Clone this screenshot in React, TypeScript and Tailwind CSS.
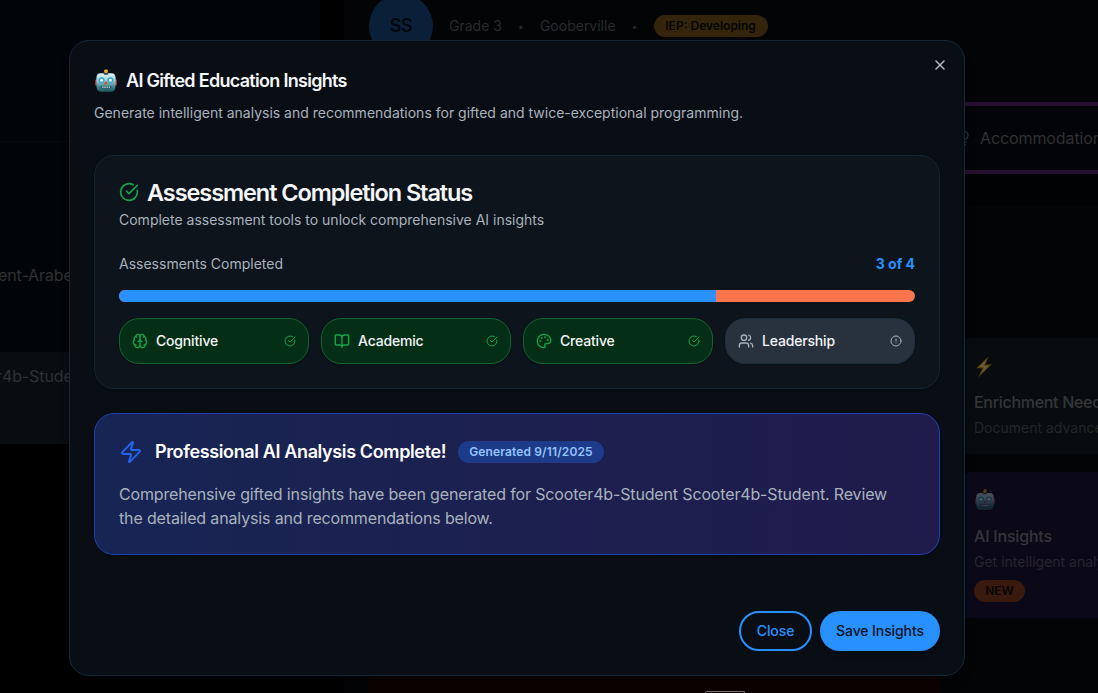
import React from "react";
import {
  Brain,
  BookOpen,
  CircleAlert,
  CircleCheckBig,
  Lightbulb,
  Palette,
  Users,
  X,
  Zap,
} from "lucide-react";

function Robot({ className }: { className: string }) {
  return (
    <svg viewBox="0 0 24 24" className={className} aria-hidden="true">
      <defs>
        <linearGradient id="robotFace" x1="0" y1="0" x2="0" y2="1">
          <stop offset="0" stopColor="#d9f2f4" />
          <stop offset="0.4" stopColor="#a5d0d6" />
          <stop offset="0.7" stopColor="#438b97" />
          <stop offset="1" stopColor="#17545f" />
        </linearGradient>
      </defs>
      <rect x="1" y="10.4" width="3" height="6" rx="1.2" fill="#a5343a" />
      <rect x="20" y="10.4" width="3" height="6" rx="1.2" fill="#a5343a" />
      <path d="M6.500 4.300h11Q21.600 4.300 21.600 9.300v7.200Q21.600 22.800 17 22.800H7Q2.400 22.800 2.400 16.500V9.300Q2.400 4.300 6.500 4.300Z" fill="url(#robotFace)" />
      <rect x="9.800" y="2.800" width="4.400" height="3" rx="0.8" fill="#3a4350" />
      <rect x="10.200" y="0.400" width="3.600" height="3.600" rx="1.400" fill="#f5ae2c" />
      <circle cx="7.600" cy="11.300" r="3.100" fill="#35aac2" />
      <circle cx="16.400" cy="11.300" r="3.100" fill="#35aac2" />
      <circle cx="7.600" cy="11.300" r="1.500" fill="#f3feff" />
      <circle cx="16.400" cy="11.300" r="1.500" fill="#f3feff" />
      <path d="M12 11.800 14.200 15.200H9.800Z" fill="#e0473f" />
      <rect x="6.600" y="16.900" width="10.800" height="2.600" rx="1.200" fill="#254f5b" />
      <path d="M8 18.200h8" stroke="#d8e9ea" strokeWidth="1.300" strokeDasharray="1.500 0.700" />
    </svg>
  );
}

function Bolt({ className }: { className: string }) {
  return (
    <svg viewBox="0 0 20 22" className={className} aria-hidden="true">
      <path d="M14.500 0.500 2.300 12.300 8.600 12.200 4.200 21.500 17.700 8.300 11.200 8.700Z" fill="#5a3f0a" />
      <path d="M12.700 3.200 4.600 11.300 10 11.200 7 17.700 15 9.500 9.500 9.800Z" fill="#665a38" />
    </svg>
  );
}

const assessments = [
  { name: "Cognitive", icon: Brain, done: true },
  { name: "Academic", icon: BookOpen, done: true },
  { name: "Creative", icon: Palette, done: true },
  { name: "Leadership", icon: Users, done: false },
];

function AssessmentChip({ name, icon: Icon, done }: (typeof assessments)[number]) {
  return (
    <div
      className={
        "flex h-[46px] items-center gap-2 rounded-[20px] border px-3 shadow-sm " +
        (done ? "border-[#14642f] bg-[#052e16]" : "border-[#1c2f3f] bg-[#28323e]")
      }
    >
      <Icon size={16} className={done ? "text-[#16a34a]" : "text-[#a6afba]"} />
      <span className="flex-1 text-sm font-medium tracking-[-0.18px] text-[#f2f4f6]">{name}</span>
      {done ? (
        <CircleCheckBig size={12} className="text-[#16a34a]" />
      ) : (
        <CircleAlert size={12} className="text-[#a6afba]" />
      )}
    </div>
  );
}

function Sidebar() {
  return (
    <aside className="flex w-80 shrink-0 flex-col bg-[#020507] text-base tracking-[-0.1px] text-[#2f3133]">
      <div className="h-[142px] border-b border-[#06090b]" />
      <div className="-ml-0.5 h-[210px] pt-[121px] whitespace-nowrap">ent-Arabella</div>
      <div className="-ml-1 h-[92px] bg-[#0a0d10] pt-3 whitespace-nowrap">r4b-Student</div>
      <div className="flex-1 bg-black" />
    </aside>
  );
}

function StudentPage() {
  return (
    <main className="ml-6 flex w-[900px] shrink-0 flex-col bg-[#020406]">
      <header className="flex h-[102px] shrink-0 items-start pl-[25px] text-sm text-[#292b2d]">
        <div className="-mt-[6px] flex size-16 items-center justify-center rounded-full bg-[#0a1f38] text-lg font-medium tracking-[-0.4px] text-[#020508]">
          SS
        </div>
        <div className="mt-[15px] ml-4 flex h-[22px] items-center gap-4">
          <span>Grade 3</span>
          <span className="w-[6px] text-center text-[10px]">•</span>
          <span>Gooberville</span>
          <span className="w-[6px] text-center text-[10px]">•</span>
          <span className="flex h-[22px] w-[114px] items-center justify-center rounded-full bg-[#35240c] text-xs font-semibold text-[#050505]">
            IEP: Developing
          </span>
        </div>
      </header>
      <nav className="flex h-[72px] shrink-0 items-center border-y-4 border-[#270f30] bg-[#030407] pl-[612px] text-base tracking-[-0.1px] text-[#303133]">
        <Lightbulb size={16} />
        <span className="ml-2 whitespace-nowrap">Accommodations</span>
      </nav>
      <div className="h-8 shrink-0 bg-[#010203]" />
      <div className="flex h-[470px] shrink-0 flex-col pt-[132px] pl-[614px]">
        <section className="h-[116px] shrink-0 rounded-xl bg-[#080c0f] pt-[18px] pl-4 whitespace-nowrap">
          <Bolt className="h-[22px] w-5" />
          <h3 className="mt-3 text-base font-medium tracking-[-0.3px] text-[#343638]">Enrichment Needs</h3>
          <p className="mt-1 text-sm text-[#212528]">Document advanced learning</p>
        </section>
        <section className="mt-[18px] h-[146px] shrink-0 rounded-xl bg-[#0b0817] pt-[17px] pl-4 whitespace-nowrap">
          <Robot className="size-[22px] opacity-30" />
          <h3 className="mt-[13px] text-base font-medium tracking-[-0.2px] text-[#36343b]">AI Insights</h3>
          <p className="mt-1 text-sm text-[#28252f]">Get intelligent analysis</p>
          <span className="mt-2 flex h-[22px] w-[51px] items-center justify-center rounded-full bg-[#3a190f] text-xs font-semibold text-[#070403]">
            NEW
          </span>
        </section>
      </div>
      <div className="ml-[25px] flex h-[17px] w-[571px] shrink-0 items-end justify-end bg-[#0c0201] pr-[195px]">
        <div className="h-0.5 w-10 rounded-t border border-b-0 border-[#77716f]" />
      </div>
    </main>
  );
}

function InsightsDialog() {
  return (
    <div
      role="dialog"
      className="absolute top-10 left-[69px] flex h-[636px] w-[896px] flex-col rounded-[20px] border border-[#152838] bg-[#090e15] p-6 shadow-lg"
    >
      <button className="absolute top-4 right-4 flex size-4 items-center justify-center text-[#b9bec3]" aria-label="Close dialog">
        <X size={16} />
      </button>
      <div className="flex h-8 items-center gap-2">
        <Robot className="size-6" />
        <h1 className="text-lg font-semibold tracking-[-0.7px] text-[#f4f6f8]">AI Gifted Education Insights</h1>
      </div>
      <p className="mt-1.5 text-sm text-[#a9b2bc]">
        Generate intelligent analysis and recommendations for gifted and twice-exceptional programming.
      </p>

      <section className="mt-8 rounded-[20px] border border-[#152533] bg-[#0d141c] p-6 shadow-sm">
        <h2 className="flex h-6 items-center gap-2 text-[23.5px] leading-none font-semibold tracking-[-1.08px] text-[#f4f6f8]">
          <CircleCheckBig size={20} className="text-[#16a34a]" />
          <span className="pt-0.5">Assessment Completion Status</span>
        </h2>
        <p className="mt-1.5 text-sm text-[#a9b2bc]">
          Complete assessment tools to unlock comprehensive AI insights
        </p>
        <div className="mt-6 flex justify-between text-sm text-[#a9b2bc]">
          <span>Assessments Completed</span>
          <span className="font-bold text-[#2b90ff]">3 of 4</span>
        </div>
        <div className="mt-4 h-3 overflow-hidden rounded-full bg-[#fa744c]">
          <div className="h-full w-3/4 bg-[#2890ff]" />
        </div>
        <div className="mt-4 grid grid-cols-4 gap-3">
          {assessments.map((item) => (
            <AssessmentChip key={item.name} {...item} />
          ))}
        </div>
      </section>

      <section className="mt-6 h-[142px] rounded-[20px] border border-[#1e40af] bg-linear-to-r from-[#172554] to-[#1f1b4b] p-6 shadow-sm">
        <div className="flex h-7 items-center gap-3">
          <Zap size={24} className="text-[#2563eb]" />
          <h2 className="text-lg font-semibold tracking-[-0.37px] text-white">Professional AI Analysis Complete!</h2>
          <span className="flex h-[22px] items-center rounded-full bg-[#1e3a8a] px-[11px] text-xs font-semibold tracking-[0.13px] text-[#93c5fd]">
            Generated 9/11/2025
          </span>
        </div>
        <p className="mt-4 max-w-[780px] text-base tracking-[-0.15px] text-[#a9b2bc]">
          Comprehensive gifted insights have been generated for Scooter4b-Student Scooter4b-Student. Review the
          detailed analysis and recommendations below.
        </p>
      </section>

      <footer className="mt-auto flex justify-end gap-2 text-sm font-medium tracking-[-0.1px]">
        <button className="h-10 w-[73px] rounded-[20px] border-2 border-[#2890ff] text-[#2890ff]">Close</button>
        <button className="h-10 w-[120px] rounded-[20px] bg-[#2890ff] text-[#0a1420] shadow-md">Save Insights</button>
      </footer>
    </div>
  );
}

export default function App() {
  return (
    <div className="relative h-[693px] w-[1098px] overflow-hidden bg-black font-['Inter',sans-serif]">
      <div className="flex h-full">
        <Sidebar />
        <StudentPage />
      </div>
      <InsightsDialog />
    </div>
  );
}
